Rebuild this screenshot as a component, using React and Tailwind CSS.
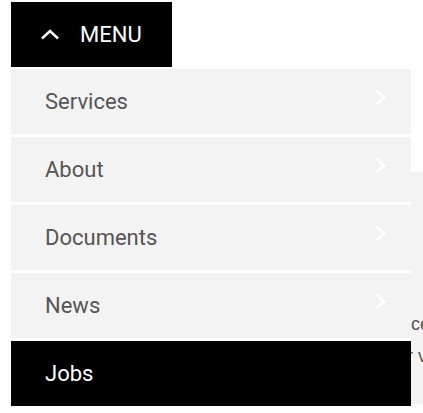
import React from "react";

const items = [
  { label: "Services", arrow: true },
  { label: "About", arrow: true },
  { label: "Documents", arrow: true },
  { label: "News", arrow: true },
  { label: "Jobs", active: true },
];

const ChevronRight = () => (
  <svg width="11" height="17" viewBox="0 0 11 17" className="mb-2" fill="none">
    <polyline points="1.5,1.5 9,8.5 1.5,15.5" stroke="#ffffff" strokeWidth="3" />
  </svg>
);

const ChevronUp = () => (
  <svg width="20" height="11" viewBox="0 0 20 11" fill="none">
    <polyline points="2,9.5 10,2 18,9.5" stroke="#f2f2f2" strokeWidth="2.6" />
  </svg>
);

const App = () => {
  return (
    <div className="relative w-[423px] h-[413px] overflow-hidden bg-white font-['Roboto',sans-serif]">
      {/* toggle */}
      <button className="ml-[11px] mt-[2px] w-[161px] h-[65px] bg-black flex items-center pl-[29px] gap-[20px] text-white text-[22px]">
        <ChevronUp />
        <span>MENU</span>
      </button>

      {/* page content behind the open menu */}
      <div className="mt-[105px] ml-[11px] w-[600px] h-[232px] bg-[#f3f3f3] flex font-['Liberation_Sans',Arial,sans-serif] text-[18px] leading-[32px] text-[#555]">
        <div className="w-[398px] shrink-0" />
        <div className="pt-[104px] whitespace-nowrap">
          <p>
            <span className="inline-block w-px h-[6px] bg-[#9cb9dc]" />
          </p>
          <p className="pl-[2px]">centre of the community</p>
          <p className="-ml-[2px]">r vacancies and opportunities</p>
        </div>
      </div>

      {/* dropdown */}
      <ul className="absolute top-[69px] left-[11px] w-[400px] flex flex-col gap-[3px] bg-white">
        {items.map((item) => (
          <li
            key={item.label}
            className={`h-[65px] flex items-center justify-between pl-[34px] pr-[25px] text-[22px] ${
              item.active ? "bg-black text-white" : "bg-[#f3f3f3] text-[#555]"
            }`}
          >
            <span>{item.label}</span>
            {item.arrow && <ChevronRight />}
          </li>
        ))}
      </ul>
    </div>
  );
};

export default App;
